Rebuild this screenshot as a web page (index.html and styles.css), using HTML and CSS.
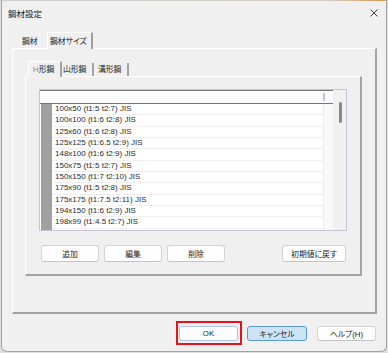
FILE: index.html
```html
<!DOCTYPE html>
<html lang="ja">
<head>
<meta charset="utf-8">
<title>鋼材設定</title>
<link rel="stylesheet" href="styles.css">
</head>
<body>
<div class="window">
  <div class="topedge"></div>
  <div class="titlebar">
    <span class="title">鋼材設定</span>
    <svg class="close" width="8" height="8" viewBox="0 0 8 8"><path d="M0.5 0.5 L7.5 7.5 M7.5 0.5 L0.5 7.5" stroke="#2b2b2b" stroke-width="0.9" fill="none"/></svg>
  </div>
  <div class="outer">
    <div class="tabs-outer">
      <div class="otab">鋼材</div>
      <div class="otab sel">鋼材サイズ</div>
    </div>
    <div class="panel-outer">
      <div class="tabs-inner">
        <div class="itab sel"><span class="hot">H</span>形鋼</div>
        <div class="itab t2">山形鋼</div>
        <div class="itab t3">溝形鋼</div>
      </div>
      <div class="panel-inner">
        <div class="list">
          <div class="list-main">
            <div class="header"><span class="hdiv"></span></div>
            <div class="rows">
              <div class="row"><span class="mark"></span><span class="cell">100x50 (t1:5 t2:7) JIS</span></div>
              <div class="row"><span class="mark"></span><span class="cell">100x100 (t1:6 t2:8) JIS</span></div>
              <div class="row"><span class="mark"></span><span class="cell">125x60 (t1:6 t2:8) JIS</span></div>
              <div class="row"><span class="mark"></span><span class="cell">125x125 (t1:6.5 t2:9) JIS</span></div>
              <div class="row"><span class="mark"></span><span class="cell">148x100 (t1:6 t2:9) JIS</span></div>
              <div class="row"><span class="mark"></span><span class="cell">150x75 (t1:5 t2:7) JIS</span></div>
              <div class="row"><span class="mark"></span><span class="cell">150x150 (t1:7 t2:10) JIS</span></div>
              <div class="row"><span class="mark"></span><span class="cell">175x90 (t1:5 t2:8) JIS</span></div>
              <div class="row"><span class="mark"></span><span class="cell">175x175 (t1:7.5 t2:11) JIS</span></div>
              <div class="row"><span class="mark"></span><span class="cell">194x150 (t1:6 t2:9) JIS</span></div>
              <div class="row"><span class="mark"></span><span class="cell">198x99 (t1:4.5 t2:7) JIS</span></div>
              <div class="row"><span class="mark"></span><span class="cell"></span></div>
            </div>
          </div>
          <div class="vscroll"><span class="thumb"></span></div>
        </div>
        <div class="btnrow">
          <div class="btn">追加</div>
          <div class="btn">編集</div>
          <div class="btn">削除</div>
          <div class="btn reset">初期値に戻す</div>
        </div>
      </div>
    </div>
  </div>
  <div class="footer">
    <div class="okwrap"><div class="dbtn ok">OK</div></div>
    <div class="dbtn cancel">キャンセル</div>
    <div class="dbtn help">ヘルプ(H)</div>
  </div>
</div>
</body>
</html>
```
FILE: styles.css
```css
* { box-sizing: border-box; }
html, body { margin: 0; padding: 0; }
body {
  width: 388px;
  height: 353px;
  overflow: hidden;
  background: #dedede;
  font-family: "Liberation Sans", "Noto Sans CJK JP", sans-serif;
  font-size: 8px;
  color: #1b1b1b;
  font-feature-settings: "palt";
}
.window {
  margin-left: 1px;
  width: 386px;
  height: 352px;
  background: #f0f0f0;
  border: 1px solid #a3a3a3;
  border-top: none;
  border-radius: 0 0 6px 6px;
  display: flex;
  flex-direction: column;
  overflow: hidden;
}
.topedge {
  flex: none;
  height: 1px;
  background: linear-gradient(to right, #cfcfcf, #d3ccc3 85%, #d89a48);
}
.titlebar {
  flex: none;
  height: 31px;
  display: flex;
  justify-content: space-between;
  align-items: flex-start;
  padding: 7px 8px 0 6px;
}
.title { font-size: 8.5px; line-height: 12px; }
.close { display: block; margin-top: 1px; }

.outer { margin: 0 9px 0 10px; }
.tabs-outer { display: flex; align-items: flex-end; height: 16px; }
.otab {
  height: 13px;
  line-height: 13px;
  font-size: 7.8px;
  width: 35px;
  padding-left: 10px;
  white-space: nowrap;
}
.otab.sel {
  position: relative;
  z-index: 1;
  width: 46px;
  height: 17px;
  margin-bottom: -1px;
  padding: 3px 0 0 2px;
  line-height: 12px;
  background: #f0f0f0;
  border-top: 1px solid #ffffff;
  border-left: 1px solid #ffffff;
  border-right: 2px solid #a0a0a0;
}
.panel-outer {
  height: 266px;
  border-top: 1px solid #ffffff;
  border-left: 1px solid #ffffff;
  border-right: 2px solid #a3a3a3;
  border-bottom: 2px solid #a3a3a3;
  padding: 12px 13px 0 12px;
}
.tabs-inner { display: flex; align-items: flex-end; height: 15px; margin-left: 3px; }
.itab {
  height: 13px;
  line-height: 13px;
  font-size: 7.8px;
  white-space: nowrap;
  border-right: 2px solid #a3a3a3;
}
.itab.sel {
  position: relative;
  z-index: 1;
  width: 34px;
  height: 16px;
  margin-bottom: -1px;
  padding: 2px 0 0 4px;
  line-height: 12px;
  background: #f0f0f0;
  border-top: 1px solid #ffffff;
  border-left: 1px solid #ffffff;
}
.hot { color: #c0702c; }
.itab.t2 { width: 32px; padding-left: 1px; }
.itab.t3 { width: 35px; padding-left: 4px; }

.panel-inner {
  height: 200px;
  border-top: 1px solid #ffffff;
  border-left: 1px solid #ffffff;
  border-right: 2px solid #a3a3a3;
  border-bottom: 2px solid #a3a3a3;
  padding: 12px 13px 0 13px;
  display: flex;
  flex-direction: column;
}
.list {
  flex: none;
  height: 142px;
  border: 1px solid #c4c2da;
  background: #ffffff;
  display: flex;
}
.list-main {
  flex: 1;
  display: flex;
  flex-direction: column;
  background: #f9f9f9;
  overflow: hidden;
}
.header {
  flex: none;
  height: 14px;
  border-top: 1px solid #767676;
  border-bottom: 1px solid #767676;
  background: #fcfcfc;
  padding: 2px 0 0 283px;
}
.hdiv { display: block; width: 2px; height: 8px; background: #c3c1d8; }
.rows { flex: 1; overflow: hidden; }
.row { display: flex; height: 11.33px; }
.mark {
  flex: none;
  width: 12px;
  border-left: 1px solid #ffffff;
  background: #a0a0a0;
}
.cell {
  flex: none;
  width: 272px;
  padding-left: 3px;
  background: #ffffff;
  border-bottom: 1px solid #efefef;
  border-right: 1px solid #e9e9e9;
  font-size: 8px;
  line-height: 10.33px;
  white-space: nowrap;
  color: #2a2a2a;
}
.vscroll {
  flex: none;
  width: 13px;
  background: #f0f0f0;
  padding: 12px 0 0 6px;
}
.thumb { display: block; width: 3px; height: 21px; background: #878787; border-radius: 2px; }

.btnrow {
  display: flex;
  gap: 5px;
  margin-top: 14px;
  padding: 0 1px 0 2px;
}
.btn, .dbtn {
  display: flex;
  align-items: center;
  justify-content: center;
  font-size: 7.8px;
  color: #222;
  white-space: nowrap;
  background: #fdfdfd;
  border: 1px solid #d3d3d3;
  border-bottom-color: #c4c4c4;
  border-radius: 3px;
}
.btn { width: 58px; height: 17px; }
.btn.reset { width: 64px; margin-left: auto; }

.footer {
  display: flex;
  justify-content: flex-end;
  align-items: flex-start;
  margin-top: 7px;
  padding-right: 10px;
}
.okwrap {
  display: flex;
  border: 2px solid #e8101a;
  padding: 3px 2px 2px 1px;
}
.dbtn { height: 15px; }
.dbtn.ok { width: 59px; border-color: #aac8e6; }
.dbtn.cancel {
  width: 60px;
  margin: 5px 0 0 5px;
  background: #cce3f6;
  border-color: #5b9ad6;
}
.dbtn.help { width: 59px; margin: 5px 0 0 10px; }
```
